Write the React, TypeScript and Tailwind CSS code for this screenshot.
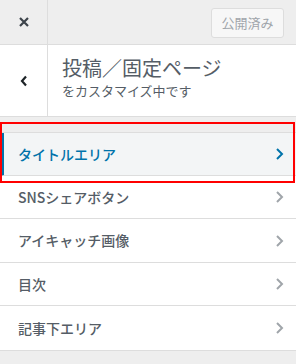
import React from "react";

const ITEMS = [
  { label: "タイトルエリア", active: true, h: "h-[43px]" },
  { label: "SNSシェアボタン", active: false, h: "h-[43px]" },
  { label: "アイキャッチ画像", active: false, h: "h-[44px]" },
  { label: "目次", active: false, h: "h-[43px]" },
  { label: "記事下エリア", active: false, h: "h-[45px]" },
];

function Chevron({ color }: { color: string }) {
  return (
    <svg width="10" height="14" viewBox="0 0 10 14" fill="none">
      <path d="M3 2 L8 7 L3 12" stroke={color} strokeWidth="2" />
    </svg>
  );
}

export default function App() {
  return (
    <div
      className="relative h-[364px] w-[296px] overflow-hidden bg-[#eeeeee]"
      style={{ fontFamily: '"Noto Sans CJK JP", "Noto Sans", sans-serif' }}
    >
      {/* ── Top bar ─────────────────────────────── */}
      <div className="flex h-[45px] border-b border-[#dddddd]">
        <div className="flex w-[48px] items-center justify-center border-r border-[#dddddd]">
          <svg width="12" height="12" viewBox="0 0 12 12">
            <path d="M2 2 L10 10 M10 2 L2 10" stroke="#3c434a" strokeWidth="2.2" />
          </svg>
        </div>
        <div className="flex flex-1 items-start justify-end pr-[12px] pt-[8px]">
          <div className="flex h-[30px] w-[73px] items-center justify-center rounded-[3px] border border-[#dddddd] bg-[#f7f7f7] text-[13px] text-[#a0a5aa]">
            公開済み
          </div>
        </div>
      </div>

      {/* ── Section header ──────────────────────── */}
      <div className="flex h-[72px] border-b border-[#dddddd] bg-white">
        <div className="flex w-[48px] items-center justify-center border-r border-[#dddddd]">
          <svg width="10" height="14" viewBox="0 0 10 14" fill="none">
            <path d="M7 2.5 L3 7 L7 11.5" stroke="#1d2327" strokeWidth="2.2" />
          </svg>
        </div>
        <div className="flex flex-col pl-[14px] pt-[9px]">
          <span className="text-[20px] leading-[28px] text-[#555d66]">投稿／固定ページ</span>
          <span className="text-[13px] leading-[18px] text-[#555d66]">をカスタマイズ中です</span>
        </div>
      </div>

      {/* ── Sections list ───────────────────────── */}
      <div className="mt-[15px] border-t border-[#dddddd]">
        {ITEMS.map(({ label, active, h }) => (
          <div
            key={label}
            className={`flex ${h} items-center justify-between border-b border-[#dddddd] pr-[12px] ${
              active ? "border-l-4 border-l-[#0073aa] bg-[#f3f5f6] pl-[14px]" : "bg-white pl-[18px]"
            }`}
          >
            <span className={`text-[14px] font-medium ${active ? "text-[#0073aa]" : "text-[#555d66]"}`}>{label}</span>
            <Chevron color={active ? "#0073aa" : "#a0a5aa"} />
          </div>
        ))}
      </div>

      {/* ── Highlight box ───────────────────────── */}
      <div className="absolute left-0 top-[122px] h-[61px] w-[295px] border-2 border-[#ff0000]" />
    </div>
  );
}
